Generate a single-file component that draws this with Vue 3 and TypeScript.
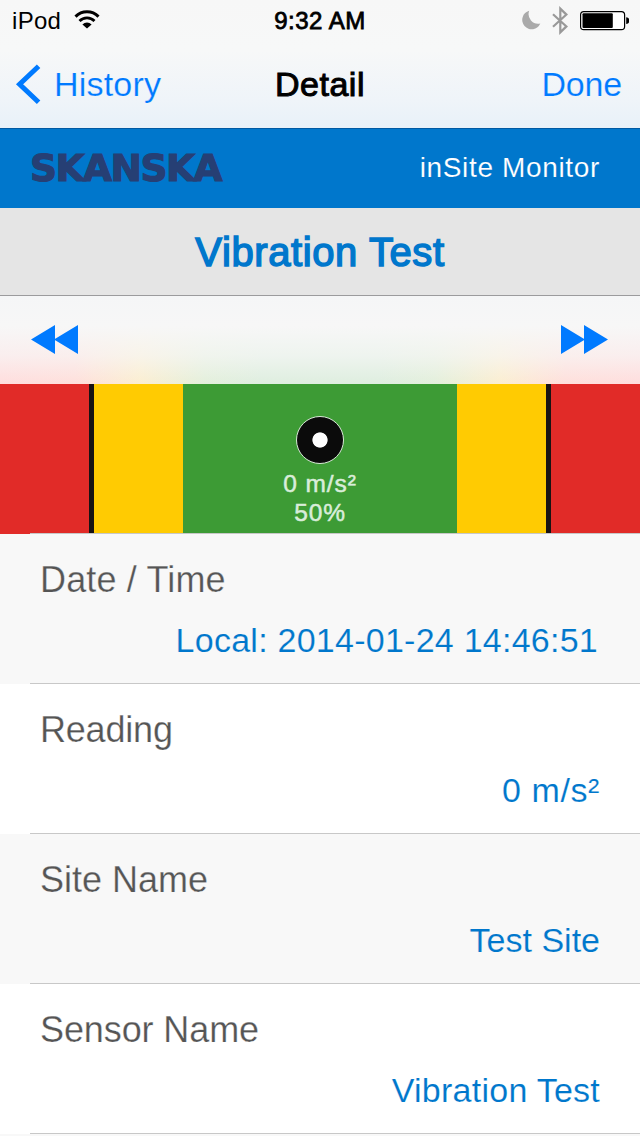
<script setup lang="ts">
interface Row {
  label: string
  value: string
  kind: string
}

const rows: Row[] = [
  { label: 'Date / Time', value: 'Local: 2014-01-24 14:46:51', kind: 'date' },
  { label: 'Reading', value: '0 m/s²', kind: 'reading' },
  { label: 'Site Name', value: 'Test Site', kind: 'site' },
  { label: 'Sensor Name', value: 'Vibration Test', kind: 'sensor' },
]

const zones: string[] = ['red', 'mark', 'yellow', 'green', 'yellow', 'mark', 'red']
</script>

<template>
  <main class="screen">
    <header class="top">
      <div class="status">
        <div class="side">
          <span class="carrier">iPod</span>
          <svg class="wifi" width="26" height="20" viewBox="0 0 26 20" fill="none" stroke="#000">
            <path d="M1.5 7.6a16.2 16.2 0 0 1 23 0" stroke-width="3" />
            <path d="M5.5 12a10.6 10.6 0 0 1 15 0" stroke-width="2.8" />
            <path d="M13 19.6 8.4 15.4a6.400 6.400 0 0 1 9.200 0Z" fill="#000" stroke="none" />
          </svg>
        </div>
        <span class="time">9:32 AM</span>
        <div class="side right">
          <svg width="108" height="30" viewBox="0 0 108 30">
            <path d="M8.2 5.8A9.4 9.4 0 1 0 19.3 18.5 9.6 9.6 0 0 1 8.2 5.8Z" fill="#aaa" />
            <path d="M32 9.2 45.4 21.4 39.3 27.3V3.7L45.4 9.6 32 21.8" fill="none" stroke="#999" stroke-width="2.2" />
            <rect x="59.6" y="6.6" width="44" height="18" rx="3.2" fill="#fff" stroke="#000" stroke-width="1.2" />
            <rect x="61.5" y="8.2" width="30.3" height="14.8" rx="1" fill="#000" />
            <path d="M105.2 12.2c2 .2 3.1 1.4 3.1 3.4s-1.1 3.2-3.1 3.4Z" fill="#000" />
          </svg>
        </div>
      </div>
      <nav class="nav">
        <div class="side back">
          <svg width="26" height="42" viewBox="0 0 26 42" fill="none" stroke="#007aff" stroke-width="5">
            <path d="M23.6 3.3 4.6 21.3 23.6 39.3" />
          </svg>
          <span class="history">History</span>
        </div>
        <span class="heading">Detail</span>
        <div class="side right"><span class="done">Done</span></div>
      </nav>
    </header>

    <section class="brand">
      <span class="logo">SKANSKA</span>
      <span class="product">inSite Monitor</span>
    </section>

    <h1 class="title">Vibration Test</h1>

    <section class="pager">
      <svg width="48" height="30" viewBox="0 0 48 30" fill="#007aff">
        <path d="M0 14.5 24 0v29ZM23 14.5 47 0v29Z" />
      </svg>
      <svg width="48" height="30" viewBox="0 0 48 30" fill="#007aff">
        <path d="M1 0 25 14.5 1 29ZM24 0 48 14.5 24 29Z" />
      </svg>
    </section>

    <section class="gauge">
      <div v-for="(zone, i) in zones" :key="i" class="zone" :class="zone">
        <template v-if="zone === 'green'">
          <span class="marker"></span>
          <span class="reading-now">0 m/s²</span>
          <span class="percent">50%</span>
        </template>
      </div>
    </section>

    <section class="list">
      <article v-for="row in rows" :key="row.label" class="row" :class="row.kind">
        <span class="label">{{ row.label }}</span>
        <span class="value">{{ row.value }}</span>
      </article>
      <div class="row next"></div>
    </section>
  </main>
</template>

<style>
body {
  margin: 0;
  overflow: hidden;
}
</style>

<style scoped>
.screen {
  width: 640px;
  height: 1136px;
  overflow: hidden;
  background: #fff;
  font-family: "Liberation Sans", Arial, sans-serif;
  color: #000;
}
.top {
  height: 128px;
  background: linear-gradient(#f7f7f7 0, #f7f8f8 50px, #eff4f9 100px, #e8f1f9 128px);
}
.status {
  display: flex;
  height: 40px;
  font-size: 24px;
  line-height: 42px;
}
.side {
  display: flex;
  flex: 1 1 0;
}
.right {
  justify-content: flex-end;
}
.status svg {
  flex: none;
}
.carrier {
  margin-left: 12px;
  letter-spacing: 0.3px;
}
.wifi {
  margin: 9px 0 0 12.5px;
}
.time {
  letter-spacing: 0.5px;
  -webkit-text-stroke: 0.8px #000;
}
.status .right svg {
  margin: 5px 11px 0 0;
}
.nav {
  display: flex;
  height: 88px;
  font-size: 34px;
  line-height: 88px;
}
.back svg {
  margin: 23px 0 0 15px;
}
.history {
  margin-left: 13px;
  color: #007aff;
  letter-spacing: 0.2px;
  -webkit-text-stroke: 0.2px #f1f5f9;
}
.heading {
  letter-spacing: 0.5px;
  -webkit-text-stroke: 1px #000;
}
.done {
  margin-right: 18px;
  color: #007aff;
  letter-spacing: -0.2px;
  -webkit-text-stroke: 0.2px #f1f5f9;
}
.brand {
  box-sizing: border-box;
  display: flex;
  justify-content: space-between;
  height: 80px;
  padding: 0 40px 0 30px;
  border-top: 1px solid #0059a3;
  background: #0077cc;
  line-height: 77px;
}
.logo {
  color: #263f74;
  font-family: "DejaVu Sans", sans-serif;
  font-size: 37.5px;
  font-weight: 700;
  line-height: 79px;
  letter-spacing: -1.5px;
  -webkit-text-stroke: 1.2px #263f74;
}
.product {
  color: #fff;
  font-size: 28px;
  letter-spacing: 0.65px;
  -webkit-text-stroke: 0.15px #0077cc;
}
.title {
  box-sizing: border-box;
  height: 88px;
  margin: 0;
  border-bottom: 1px solid #9b9b9d;
  background: #e5e5e5;
  color: #0077cc;
  font-size: 40px;
  font-weight: 400;
  line-height: 89px;
  text-align: center;
  letter-spacing: 0.6px;
  -webkit-text-stroke: 1.5px #0077cc;
}
.pager {
  box-sizing: border-box;
  display: flex;
  justify-content: space-between;
  height: 88px;
  padding: 29px 32px 0 31px;
  background:
    linear-gradient(#f5f6f7 0, #f7f7f7 30px, rgba(247, 247, 247, 0.65) 60px, rgba(247, 247, 247, 0) 88px),
    linear-gradient(90deg, #ffdddd 0, #ffdfdb 75px, #fbeed0 140px, #e3efdb 205px, #deeedf 260px, #deeedf 380px, #e3efdb 435px, #fbeed0 500px, #ffdfdb 565px, #ffdddd 640px);
}
.gauge {
  box-sizing: border-box;
  display: grid;
  grid-template-columns: 89px 5px 89px 274px 89px 5px 89px;
  height: 150px;
  padding-bottom: 1px;
  background: linear-gradient(90deg, #e12b28 30px, #c8c8c8 30px);
}
.red {
  background: #e12b28;
}
.mark {
  background: #181313;
}
.yellow {
  background: #ffcb02;
}
.green {
  display: flex;
  flex-direction: column;
  align-items: center;
  background: #3d9b35;
  color: #d9edda;
  font-size: 24.5px;
  line-height: 29px;
}
.marker {
  box-sizing: border-box;
  flex: none;
  width: 48px;
  height: 48px;
  margin: 31.5px 0 5.5px;
  border: 1.5px solid #d6e6d5;
  border-radius: 50%;
  background: radial-gradient(circle, #fff 7.2px, #0b0b0b 8px);
}
.reading-now,
.percent {
  letter-spacing: 0.9px;
  -webkit-text-stroke: 0.5px #d9edda;
}
.row {
  --row-bg: #fff;
  box-sizing: border-box;
  display: flex;
  flex-direction: column;
  height: 150px;
  padding: 16px 40px 0;
  background: linear-gradient(90deg, transparent 30px, #c8c8c8 30px) bottom / 100% 1px no-repeat, var(--row-bg);
}
.row:nth-child(odd) {
  --row-bg: #f8f8f8;
}
.label {
  color: #555;
  font-size: 36px;
  line-height: 60px;
  -webkit-text-stroke: 0.25px var(--row-bg);
}
.value {
  align-self: flex-end;
  color: #0077cc;
  font-size: 34px;
  line-height: 60px;
  -webkit-text-stroke: 0.15px var(--row-bg);
}
.date .label {
  letter-spacing: 0.15px;
}
.date .value {
  margin-right: 2px;
  letter-spacing: 0.25px;
}
.reading .label {
  letter-spacing: -0.2px;
}
.reading .value {
  letter-spacing: 0.6px;
}
.sensor .label {
  letter-spacing: -0.1px;
}
.sensor .value {
  letter-spacing: 0.25px;
}
</style>
